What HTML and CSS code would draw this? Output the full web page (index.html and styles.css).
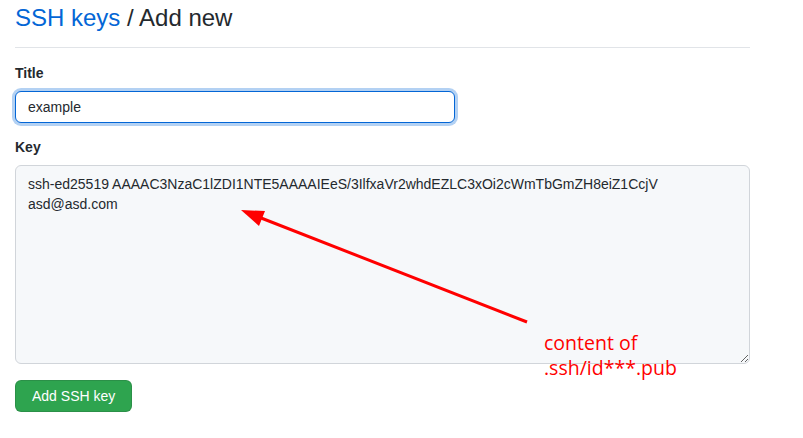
FILE: index.html
```html
<!DOCTYPE html>
<html>
<head>
<meta charset="utf-8">
<link rel="stylesheet" href="styles.css">
</head>
<body>
<div class="page">
  <div class="subhead">
    <h2 class="subhead-heading"><a class="crumb" href="#">SSH keys</a> / Add new</h2>
  </div>
  <form class="form">
    <div class="group">
      <label class="label" for="title">Title</label>
      <input id="title" class="input" type="text" value="example">
    </div>
    <div class="group">
      <label class="label" for="key">Key</label>
      <textarea id="key" class="textarea">ssh-ed25519 AAAAC3NzaC1lZDI1NTE5AAAAIEeS/3IlfxaVr2whdEZLC3xOi2cWmTbGmZH8eiZ1CcjV
asd@asd.com</textarea>
    </div>
    <button type="button" class="btn">Add SSH key</button>
  </form>
  <svg class="arrow" width="803" height="438" viewBox="0 0 803 438">
    <line x1="527" y1="322" x2="256" y2="216" stroke="#ff0000" stroke-width="3"/>
    <polygon points="241,210 265,211 259,226" fill="#ff0000"/>
  </svg>
  <div class="note">content of<br>.ssh/id***.pub</div>
</div>
</body>
</html>
```
FILE: styles.css
```css
html, body {
  margin: 0;
  padding: 0;
  background: #ffffff;
}
body {
  font-family: "Liberation Sans", Arial, sans-serif;
  font-size: 14px;
  color: #24292e;
}
.page {
  position: relative;
  width: 735px;
  padding-left: 15px;
  height: 438px;
}
.subhead {
  padding-bottom: 11px;
  border-bottom: 1px solid #e1e4e8;
}
.subhead-heading {
  margin: 0;
  font-size: 24px;
  font-weight: 400;
  line-height: 36px;
  color: #24292e;
}
.crumb {
  color: #0366d6;
  text-decoration: none;
}
.form {
  display: flex;
  flex-direction: column;
  align-items: flex-start;
  padding-top: 15px;
}
.group {
  display: flex;
  flex-direction: column;
  align-items: flex-start;
  width: 100%;
  margin-bottom: 14px;
}
.label {
  font-weight: 700;
  line-height: 21px;
  margin-bottom: 7px;
}
.input {
  box-sizing: border-box;
  width: 440px;
  height: 32px;
  padding: 5px 12px;
  font-family: inherit;
  font-size: 14px;
  color: #24292e;
  background: #ffffff;
  border: 1px solid #0366d6;
  border-radius: 6px;
  outline: none;
  box-shadow: 0 0 0 3px rgba(3, 102, 214, 0.3);
}
.textarea {
  box-sizing: border-box;
  width: 735px;
  height: 199px;
  padding: 8px 12px;
  font-family: inherit;
  font-size: 14px;
  line-height: 20px;
  color: #24292e;
  background: #f6f8fa;
  border: 1px solid #d1d5da;
  border-radius: 6px;
  resize: vertical;
  margin: 0;
}
.btn {
  margin-top: 2px;
  height: 32px;
  padding: 5px 16px;
  font-family: inherit;
  font-size: 14px;
  font-weight: 500;
  line-height: 20px;
  color: #ffffff;
  background: #2ea44f;
  border: 1px solid rgba(27, 31, 35, 0.15);
  border-radius: 6px;
}
.arrow {
  position: absolute;
  left: 0;
  top: 0;
  pointer-events: none;
}
.note {
  position: absolute;
  left: 544px;
  top: 330px;
  font-family: "Open Sans", "Noto Sans", sans-serif;
  font-size: 19.5px;
  line-height: 25px;
  color: #ff0000;
}
```
